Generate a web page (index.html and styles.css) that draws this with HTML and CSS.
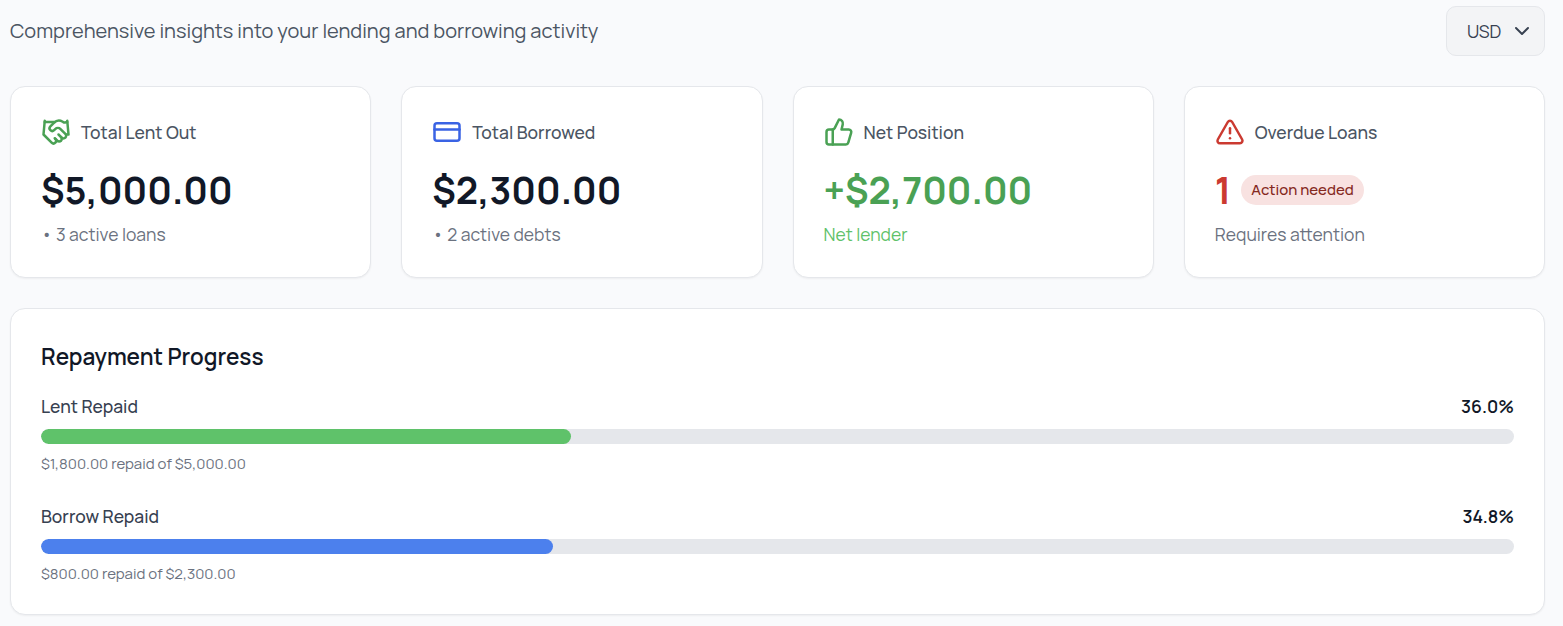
FILE: index.html
```html
<!DOCTYPE html>
<html lang="en">
<head>
<meta charset="utf-8">
<title>Loan insights</title>
<link rel="stylesheet" href="styles.css">
</head>
<body>
<main class="page">
  <header class="top">
    <p class="intro">Comprehensive insights into your lending and borrowing activity</p>
    <button class="currency"><span>USD</span><svg class="chevron" viewBox="0 0 20 20"><path d="M6 8l4 4 4-4"/></svg></button>
  </header>
  <section class="cards">
    <article class="card">
      <div class="head">
        <svg class="icon green" viewBox="0 0 24 24"><path d="m11 17 2 2a1 1 0 1 0 3-3"/><path d="m14 14 2.5 2.5a1 1 0 1 0 3-3l-3.88-3.88a3 3 0 0 0-4.24 0l-.88.88a1 1 0 1 1-3-3l2.81-2.81a5.79 5.79 0 0 1 7.06-.87l.47.28a2 2 0 0 0 1.42.25L21 4"/><path d="m21 3 1 11h-2"/><path d="M3 3 2 14l6.5 6.5a1 1 0 1 0 3-3"/><path d="M3 4h8"/></svg>
        <span class="label">Total Lent Out</span>
      </div>
      <div class="value"><span class="amount">$5,000.00</span></div>
      <p class="note">• 3 active loans</p>
    </article>
    <article class="card">
      <div class="head">
        <svg class="icon blue" viewBox="0 0 24 24"><rect x="2" y="5" width="20" height="14" rx="2"/><path d="M2 10h20"/></svg>
        <span class="label">Total Borrowed</span>
      </div>
      <div class="value"><span class="amount">$2,300.00</span></div>
      <p class="note">• 2 active debts</p>
    </article>
    <article class="card">
      <div class="head">
        <svg class="icon green" viewBox="0 0 24 24"><path d="M7 10v12"/><path d="M15 5.88 14 10h5.83a2 2 0 0 1 1.92 2.56l-2.33 8A2 2 0 0 1 17.5 22H4a2 2 0 0 1-2-2v-8a2 2 0 0 1 2-2h2.76a2 2 0 0 0 1.79-1.11L12 2a3.13 3.13 0 0 1 3 3.88Z"/></svg>
        <span class="label">Net Position</span>
      </div>
      <div class="value"><span class="amount positive">+$2,700.00</span></div>
      <p class="note lender">Net lender</p>
    </article>
    <article class="card">
      <div class="head">
        <svg class="icon red" viewBox="0 0 24 24"><path d="m21.73 18-8-14a2 2 0 0 0-3.48 0l-8 14A2 2 0 0 0 4 21h16a2 2 0 0 0 1.73-3"/><path d="M12 9v4"/><path d="M12 17h.01"/></svg>
        <span class="label">Overdue Loans</span>
      </div>
      <div class="value"><span class="amount alert">1</span><span class="badge">Action needed</span></div>
      <p class="note">Requires attention</p>
    </article>
  </section>
  <section class="panel">
    <h2 class="title">Repayment Progress</h2>
    <div class="progress">
      <div class="row"><span class="name">Lent Repaid</span><span class="percent">36.0%</span></div>
      <div class="track"><div class="fill lent-fill" style="width:36%"></div></div>
      <p class="detail">$1,800.00 repaid of $5,000.00</p>
    </div>
    <div class="progress">
      <div class="row"><span class="name">Borrow Repaid</span><span class="percent">34.8%</span></div>
      <div class="track"><div class="fill borrow-fill" style="width:34.78%"></div></div>
      <p class="detail">$800.00 repaid of $2,300.00</p>
    </div>
  </section>
</main>
</body>
</html>
```
FILE: styles.css
```css
* { box-sizing: border-box; }
body { margin: 0; background: #f9fafc; font-family: Manrope, Inter, "Liberation Sans", sans-serif; color: #111827; }
p, h2 { margin: 0; }
.page { width: 1555px; padding: 6px 10px 11px; }
.top { display: flex; justify-content: space-between; align-items: center; height: 50px; }
.intro { font-size: 20px; line-height: 30px; color: #4b5563; white-space: nowrap; }
.currency { display: flex; align-items: center; justify-content: space-between; width: 99px; height: 50px; padding: 0 7px 0 20px; border: 1px solid #e5e7eb; border-radius: 10px; background: #f3f4f6; color: #374151; font: 400 17.5px/25px Manrope, Inter, sans-serif; }
.chevron { width: 30px; height: 30px; fill: none; stroke: #374151; stroke-width: 1.3; stroke-linecap: round; stroke-linejoin: round; }
.cards { display: grid; grid-template-columns: repeat(4, 1fr); gap: 30px; margin-top: 30px; }
.card, .panel { background: #fff; border: 1px solid #e5e7eb; border-radius: 15px; box-shadow: 0 1px 2px rgba(0, 0, 0, .05); }
.card { height: 192px; padding: 30px; white-space: nowrap; }
.head { display: flex; align-items: center; gap: 10px; height: 30px; }
.icon { width: 30px; height: 30px; fill: none; stroke: currentColor; stroke-width: 2; stroke-linecap: round; stroke-linejoin: round; }
.green { color: #4aa154; }
.blue { color: #3a63e4; }
.red { color: #cb3a31; }
.label { font-size: 17.5px; line-height: 25px; font-weight: 500; color: #4b5563; }
.value { display: flex; align-items: center; gap: 10px; height: 45px; margin-top: 20px; }
.amount { font-size: 37.5px; line-height: 45px; font-weight: 700; }
.positive { color: #4aa154; }
.alert { color: #cb3a31; }
.badge { height: 30px; padding: 5px 10px; border-radius: 15px; background: #f8e2e1; color: #852921; font-size: 15px; line-height: 20px; font-weight: 500; }
.note { margin-top: 10px; font-size: 17.5px; line-height: 25px; color: #6b7280; }
.lender { color: #5fc26a; }
.panel { height: 307px; margin-top: 30px; padding: 30px; }
.title { font-size: 22.5px; line-height: 35px; font-weight: 600; }
.progress { margin-top: 30px; }
.title + .progress { margin-top: 20px; }
.row { display: flex; justify-content: space-between; font-size: 17.5px; line-height: 25px; }
.name { font-weight: 500; color: #374151; }
.percent { font-weight: 600; }
.track { height: 15px; margin-top: 10px; border-radius: 8px; background: #e5e7eb; overflow: hidden; }
.fill { height: 100%; border-radius: 8px; }
.lent-fill { background: #5fc26a; }
.borrow-fill { background: #4c80ed; }
.detail { margin-top: 10px; font-size: 15px; line-height: 20px; color: #6b7280; }
```
